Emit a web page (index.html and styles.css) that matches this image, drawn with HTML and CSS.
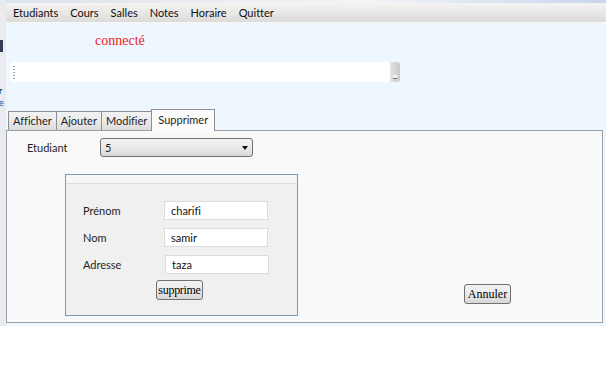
FILE: index.html
```html
<!DOCTYPE html>
<html>
<head>
    <meta charset="UTF-8">
    <title>Gestion des étudiants</title>
    <!-- Styling for the window -->
    <link rel="stylesheet" href="styles.css">
</head>
<body>
<div class="screen">
    <!-- bit of desktop visible on the left -->
    <div class="desk">
        <div class="desk-light"></div>
        <div class="desk-dark"></div>
        <div class="desk-gap"></div>
        <div class="desk-letter">r</div>
        <div class="desk-letter blue">e</div>
    </div>

    <div class="window">
        <div class="window-edge"></div>

        <!-- Menu -->
        <ul class="menubar">
            <li>Etudiants</li>
            <li>Cours</li>
            <li>Salles</li>
            <li>Notes</li>
            <li>Horaire</li>
            <li>Quitter</li>
        </ul>

        <div class="client">
            <div class="status">connecté</div>

            <!-- Toolbar -->
            <div class="toolbar">
                <div class="toolbar-grip"></div>
                <div class="toolbar-body"></div>
                <div class="toolbar-overflow"><span></span></div>
            </div>

            <!-- Tabs -->
            <div class="tabs">
                <div class="tab">Afficher</div>
                <div class="tab">Ajouter</div>
                <div class="tab">Modifier</div>
                <div class="tab active">Supprimer</div>
            </div>

            <div class="tab-panel">
                <div class="field-row">
                    <label class="field-label" for="etudiant">Etudiant</label>
                    <div class="combo" id="etudiant">
                        <span>5</span>
                        <span class="combo-arrow"></span>
                    </div>
                </div>

                <div class="panel-body">
                    <div class="group">
                        <div class="group-header"></div>
                        <div class="group-form">
                            <label>Prénom</label>
                            <input type="text" value="charifi">
                            <label>Nom</label>
                            <input type="text" value="samir">
                            <label>Adresse</label>
                            <input type="text" class="shifted" value="taza">
                        </div>
                        <button class="btn btn-delete" type="button">supprime</button>
                    </div>
                    <button class="btn btn-cancel" type="button">Annuler</button>
                </div>
            </div>
        </div>
    </div>
</div>
</body>
</html>
```

FILE: styles.css
```css
/* Page */
body {
    margin: 0;
    background-color: #fff;
    font-family: Lato, "Noto Sans", sans-serif;
    font-size: 11px;
    font-variant-ligatures: none;
    color: #1e1e1e;
}

.screen {
    display: flex;
    width: 606px;
    height: 326px;
}

/* Desktop strip on the left */
.desk {
    width: 6px;
    display: flex;
    flex-direction: column;
    background-color: #e9ebee;
    overflow: hidden;
}

.desk-light {
    height: 40px;
}

.desk-dark {
    height: 12px;
    margin-right: 3px;
    background-color: #2f3d58;
}

.desk-gap {
    height: 34px;
}

.desk-letter {
    height: 9px;
    line-height: 9px;
    font-size: 9px;
    color: #222;
    margin: 0 0 3px -1px;
    overflow: hidden;
}

.desk-letter.blue {
    color: #1d4e9e;
}

/* Window */
.window {
    flex: 1;
    display: flex;
    flex-direction: column;
}

.window-edge {
    height: 3px;
    background: linear-gradient(to right, #dde3ea, #f3f4f6 60%, #c8d6ec);
}

/* Menu bar */
.menubar {
    list-style: none;
    margin: 0;
    padding: 0 0 0 1px;
    height: 19px;
    display: flex;
    align-items: center;
    background: linear-gradient(to bottom, #f4f4f4, #e9e8e6 50%, #dddbd8);
    border-bottom: 1px solid #f7f7f7;
}

.menubar li {
    padding: 0 6px;
    font-size: 11px;
    color: #111;
}

/* Client area */
.client {
    flex: 1;
    display: flex;
    flex-direction: column;
    background-color: #eef6fe;
    padding-bottom: 3px;
}

.status {
    margin: 10px 0 0 89px;
    font-family: "Liberation Serif", serif;
    font-size: 14px;
    line-height: 16px;
    color: #ee1c24;
}

/* Toolbar */
.toolbar {
    display: flex;
    width: 390px;
    height: 20px;
    margin: 13px 0 0 4px;
    background-color: #fff;
    border-radius: 2px;
}

.toolbar-grip {
    width: 2px;
    margin: 3px 0 3px 3px;
    background-image: radial-gradient(circle, #9aa3ad 0.8px, transparent 1px);
    background-size: 2px 3px;
}

.toolbar-body {
    flex: 1;
}

.toolbar-overflow {
    width: 10px;
    position: relative;
    background: linear-gradient(to right, #e4e4e4, #c9c9c9);
    border-radius: 0 3px 3px 0;
}

.toolbar-overflow span {
    position: absolute;
    left: 3px;
    bottom: 3px;
    width: 4px;
    height: 3px;
    background-color: #f2f2f2;
    border-bottom: 1px solid #6d6d6d;
}

/* Tabs */
.tabs {
    display: flex;
    align-items: flex-end;
    margin: 27px 0 0 2px;
    height: 21px;
}

.tab {
    height: 18px;
    line-height: 18px;
    padding: 0 4px;
    border: 1px solid #8c8e94;
    border-bottom: none;
    margin-right: -1px;
    background: linear-gradient(to bottom, #f2f2f2, #ebebeb 50%, #dbdbdb);
}

.tab.active {
    height: 21px;
    line-height: 19px;
    margin: 0 -1px -1px 0;
    padding: 0 6px;
    background: #fbfbfb;
    position: relative;
    z-index: 1;
}

.tab-panel {
    height: 191px;
    margin-right: 3px;
    background-color: #f9f9f9;
    border: 1px solid #9aa0a8;
}

/* Etudiant selector */
.field-row {
    display: flex;
    align-items: center;
    margin-top: 7px;
}

.field-label {
    width: 73px;
    padding-left: 20px;
}

.combo {
    width: 143px;
    height: 17px;
    padding: 0 4px;
    display: flex;
    align-items: center;
    justify-content: space-between;
    border: 1px solid #707070;
    border-radius: 3px;
    background: linear-gradient(to bottom, #f2f2f2, #ebebeb 50%, #d9d9d9);
}

.combo-arrow {
    width: 0;
    height: 0;
    border-left: 3.5px solid transparent;
    border-right: 3.5px solid transparent;
    border-top: 4px solid #111;
}

/* Group with the student details */
.panel-body {
    display: flex;
    align-items: flex-end;
    margin-top: 17px;
}

.group {
    width: 231px;
    height: 140px;
    margin-left: 58px;
    background-color: #f0f0f0;
    border: 1px solid #7c9ab8;
}

.group-header {
    height: 8px;
    background-color: #f6f6f6;
    border-bottom: 1px solid #dedede;
}

.group-form {
    display: grid;
    grid-template-columns: 81px 104px;
    grid-auto-rows: 19px;
    row-gap: 8px;
    align-items: center;
    padding: 17px 0 0 17px;
}

.group-form input {
    box-sizing: border-box;
    width: 104px;
    height: 19px;
    margin: 0;
    padding: 0 6px;
    border: 1px solid #dcdcdc;
    background-color: #fff;
    font-family: Lato, "Noto Sans", sans-serif;
    font-size: 11px;
    font-variant-ligatures: none;
    color: #111;
    outline: none;
}

.group-form input.shifted {
    margin-left: 1px;
}

/* Buttons */
.btn {
    box-sizing: border-box;
    width: 47px;
    height: 20px;
    padding: 0;
    border: 1px solid #707070;
    border-radius: 3px;
    background: linear-gradient(to bottom, #f2f2f2, #ebebeb 50%, #d6d6d6);
    font-family: "Liberation Serif", serif;
    font-size: 12px;
    color: #000;
    white-space: nowrap;
    text-align: center;
}

.btn-delete {
    display: block;
    margin: 6px 0 0 90px;
    letter-spacing: -0.3px;
}

.btn-cancel {
    margin: 0 0 12px 166px;
}
```
